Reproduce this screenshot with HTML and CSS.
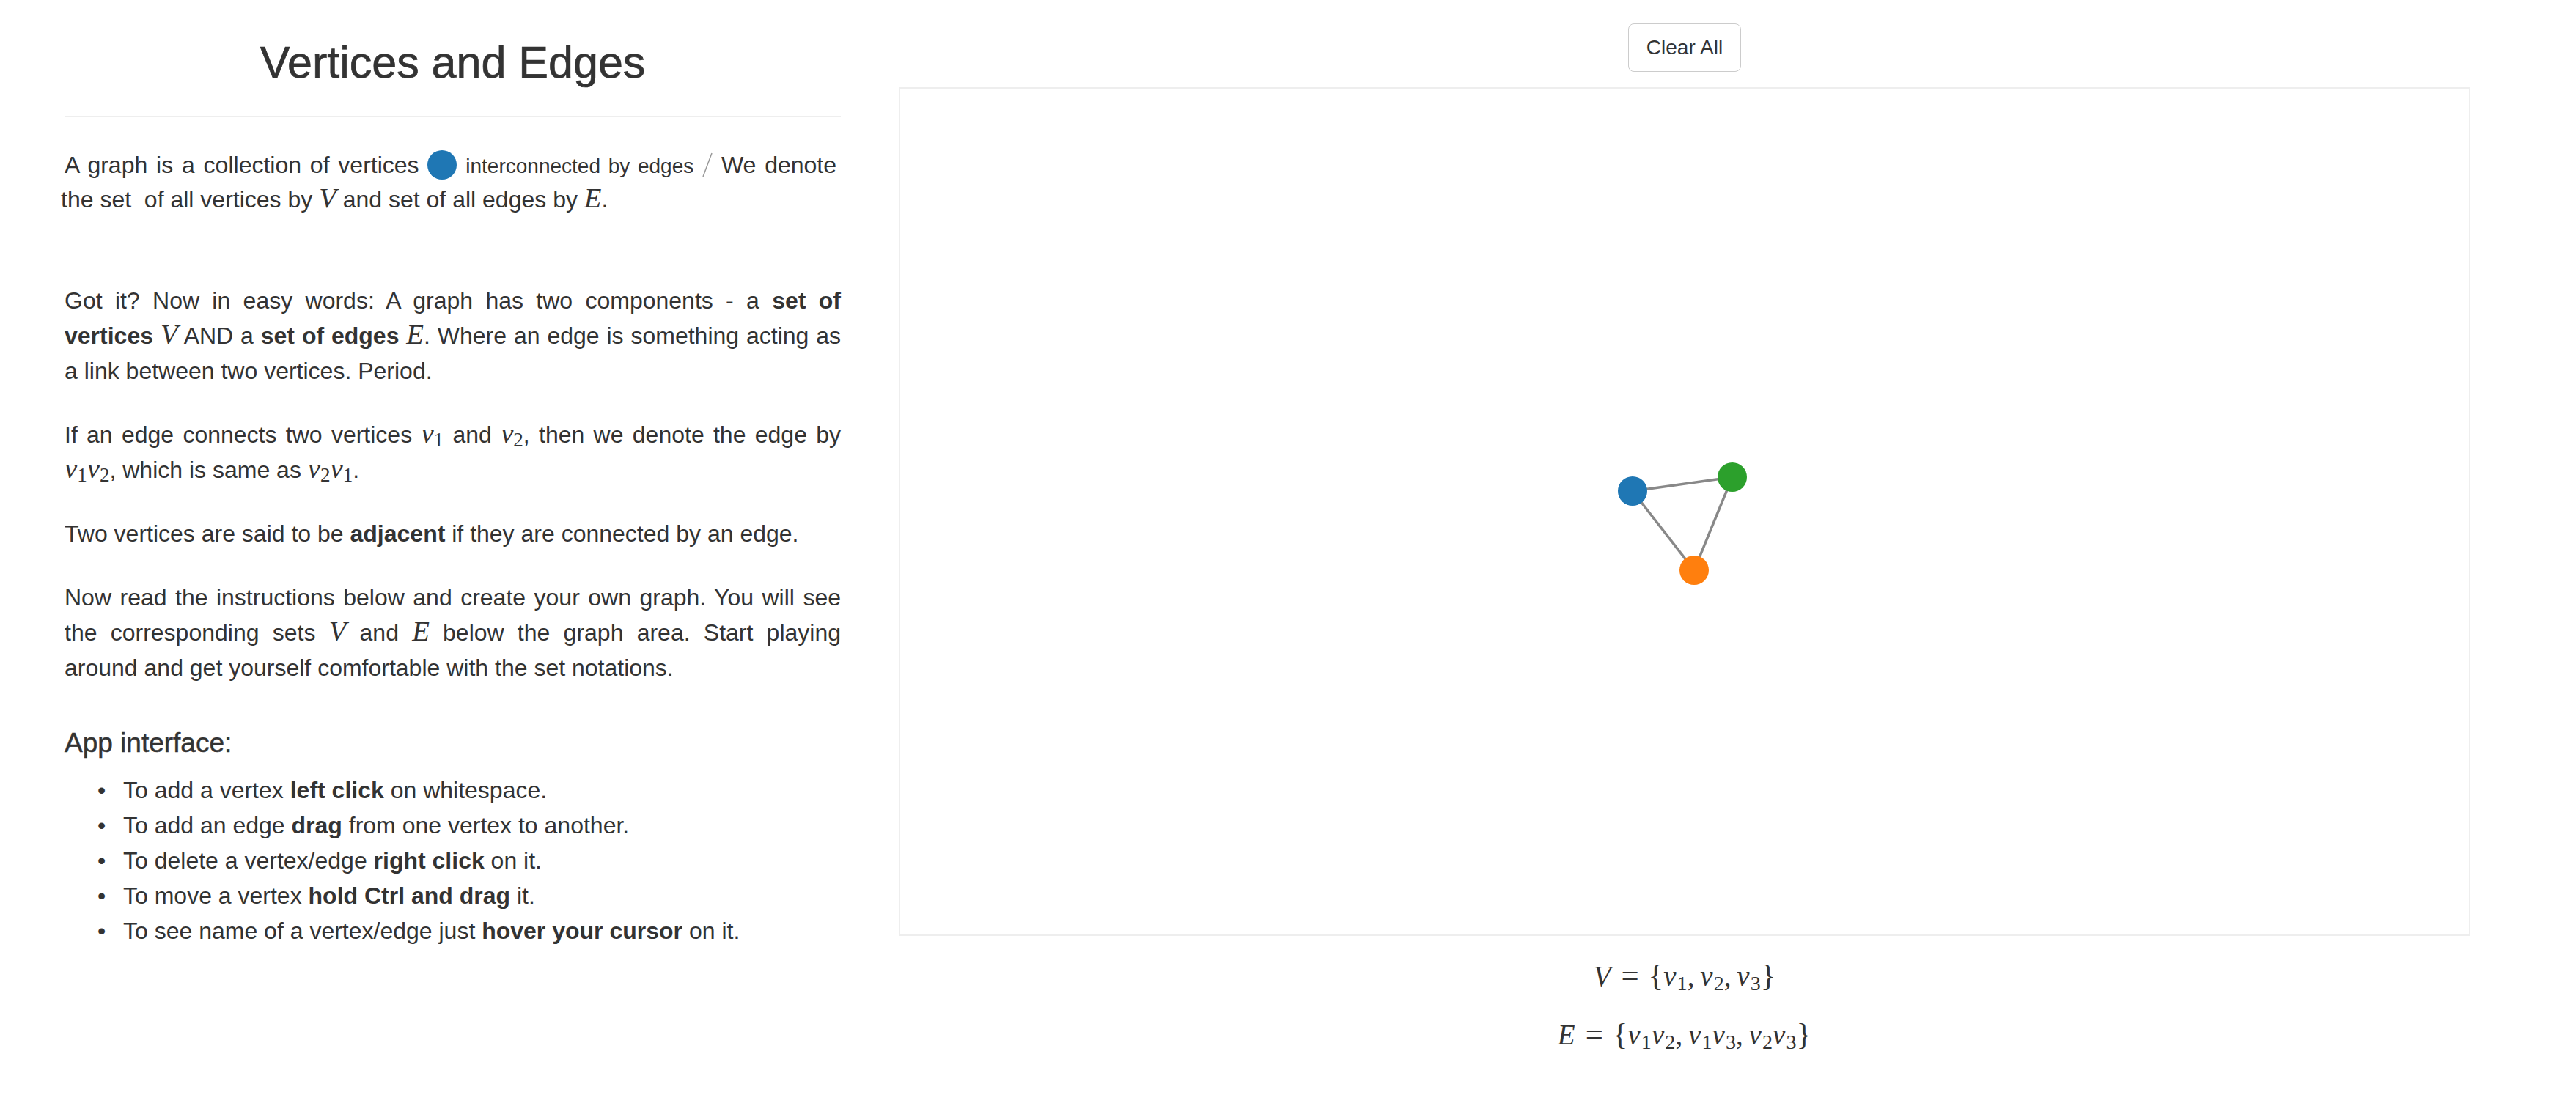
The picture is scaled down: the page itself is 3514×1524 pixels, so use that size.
FILE: index.html
```html
<!DOCTYPE html>
<html lang="en">
<head>
<meta charset="utf-8">
<title>Vertices and Edges</title>
<link rel="stylesheet" href="styles.css">
</head>
<body>
<div class="page">
  <div class="left">
    <h2 class="title">Vertices and Edges</h2>
    <hr class="rule">
    <div class="intro">
      <div class="line1">A graph is a collection of vertices <span class="vdot"></span> <span class="small">interconnected by edges</span> <svg class="edge" width="14" height="34" viewBox="0 0 14 34"><line x1="1" y1="33" x2="13" y2="1"/></svg> We denote</div>
      <div class="line2">the set&nbsp; of all vertices by <span class="mi">V</span> and set of all edges by <span class="mi">E</span>.</div>
    </div>

    <p class="para">Got it? Now in easy words: A graph has two components - a <b>set of vertices</b> <span class="mi">V</span> AND a <b>set of edges</b> <span class="mi">E</span>. Where an edge is something acting as a link between two vertices. Period.</p>

    <p class="para">If an edge connects two vertices <span class="mi">v<span class="sb">1</span></span> and <span class="mi">v<span class="sb">2</span></span>, then we denote the edge by <span class="mi">v<span class="sb">1</span>v<span class="sb">2</span></span>, which is same as <span class="mi">v<span class="sb">2</span>v<span class="sb">1</span></span>.</p>

    <p class="para">Two vertices are said to be <b>adjacent</b> if they are connected by an edge.</p>

    <p class="para last">Now read the instructions below and create your own graph. You will see the corresponding sets <span class="mi">V</span> and <span class="mi">E</span> below the graph area. Start playing around and get yourself comfortable with the set notations.</p>

    <h4 class="sub">App interface:</h4>
    <ul class="howto">
      <li>To add a vertex <b>left click</b> on whitespace.</li>
      <li>To add an edge <b>drag</b> from one vertex to another.</li>
      <li>To delete a vertex/edge <b>right click</b> on it.</li>
      <li>To move a vertex <b>hold Ctrl and drag</b> it.</li>
      <li>To see name of a vertex/edge just <b>hover your cursor</b> on it.</li>
    </ul>
  </div>

  <div class="right">
    <button class="btn" type="button">Clear All</button>
    <div class="graph">
      <svg class="canvas" width="2140" height="1154" viewBox="0 0 2140 1154">
        <g class="links">
          <line x1="999" y1="549" x2="1135" y2="530"/>
          <line x1="999" y1="549" x2="1083" y2="657"/>
          <line x1="1135" y1="530" x2="1083" y2="657"/>
        </g>
        <circle cx="999" cy="549" r="20" fill="#1f77b4"/>
        <circle cx="1135" cy="530" r="20" fill="#2ca02c"/>
        <circle cx="1083" cy="657" r="20" fill="#ff7f0e"/>
      </svg>
    </div>
    <div class="sets">
      <div class="formula"><span class="it">V</span><span class="rel">=</span><span class="br">{</span><span class="it">v</span><span class="sn">1</span><span class="pc">,</span><span class="it">v</span><span class="sn">2</span><span class="pc">,</span><span class="it">v</span><span class="sn">3</span><span class="br">}</span></div>
      <div class="formula"><span class="it">E</span><span class="rel">=</span><span class="br">{</span><span class="it">v</span><span class="sn">1</span><span class="it">v</span><span class="sn">2</span><span class="pc">,</span><span class="it">v</span><span class="sn">1</span><span class="it">v</span><span class="sn">3</span><span class="pc">,</span><span class="it">v</span><span class="sn">2</span><span class="it">v</span><span class="sn">3</span><span class="br">}</span></div>
    </div>
  </div>
</div>
</body>
</html>
```

FILE: styles.css
```css
html, body {
  margin: 0;
  padding: 0;
  background: #fff;
}
body {
  font-family: "Liberation Sans", Arial, Helvetica, sans-serif;
  color: #333;
}
.page {
  display: flex;
  align-items: flex-start;
}
.left {
  width: 1059px;
  padding-left: 88px;
  padding-top: 52px;
}
.title {
  margin: 0;
  font-size: 61px;
  line-height: 66px;
  font-weight: 500;
  text-align: center;
  color: #333;
  -webkit-text-stroke: 0.7px #333;
}
.rule {
  margin: 40px 0 43px;
  border: 0;
  border-top: 2px solid #eee;
  height: 0;
}
.intro {
  margin: 0 0 91px -5px;
  font-size: 32px;
  line-height: 45.7px;
}
.line1 {
  padding-left: 5px;
  padding-right: 6px;
  text-align: justify;
  text-align-last: justify;
}
.vdot {
  display: inline-block;
  width: 40px;
  height: 40px;
  border-radius: 50%;
  background: #1f77b4;
  vertical-align: -9px;
}
.small {
  font-size: 28px;
}
.edge {
  vertical-align: -6px;
}
.edge line {
  stroke: #999;
  stroke-width: 1.5;
}
.para {
  margin: 0 0 39px;
  font-size: 32px;
  line-height: 48px;
  text-align: justify;
}
.para.last {
  margin-bottom: 59px;
}
.mi {
  font-family: "Liberation Serif", "Times New Roman", serif;
  font-style: italic;
  font-size: 1.21em;
  line-height: 1;
}
.sb {
  font-style: normal;
  font-size: 0.7em;
  vertical-align: -0.2em;
  line-height: 1;
}
.sub {
  margin: 0 0 20px;
  font-size: 37px;
  line-height: 39.6px;
  font-weight: 500;
  -webkit-text-stroke: 0.5px #333;
}
.howto {
  margin: 0;
  padding-left: 80px;
  font-size: 32px;
  line-height: 48px;
  list-style: none;
}
.howto li::before {
  content: "\2022";
  display: inline-block;
  width: 35px;
  margin-left: -35px;
}
.right {
  margin-left: 79px;
  width: 2144px;
  padding-top: 32px;
  display: flex;
  flex-direction: column;
  align-items: center;
}
.btn {
  font-family: "Liberation Sans", Arial, sans-serif;
  font-size: 28px;
  line-height: 40px;
  padding: 12px 24px;
  border: 1.5px solid #ccc;
  border-radius: 8px;
  background: #fff;
  color: #333;
  margin: 0;
}
.graph {
  margin-top: 21px;
  width: 2144px;
  height: 1158px;
  border: 2px solid #eee;
  box-sizing: border-box;
}
.canvas {
  display: block;
}
.links line {
  stroke: #888;
  stroke-width: 3.5;
}
.sets {
  margin-top: 15px;
  display: flex;
  flex-direction: column;
  align-items: center;
}
.formula {
  font-family: "Liberation Serif", "Times New Roman", serif;
  font-size: 39px;
  line-height: 80px;
  color: #333;
  white-space: nowrap;
}
.it {
  font-style: italic;
  margin-right: 0.03em;
}
.rel {
  margin: 0 0.3em;
  font-size: 1.1em;
  line-height: 1;
}
.br {
  font-size: 1.1em;
  line-height: 1;
}
.pc {
  margin-right: 0.2em;
}
.sn {
  font-size: 0.72em;
  vertical-align: -0.22em;
  line-height: 1;
}
```
